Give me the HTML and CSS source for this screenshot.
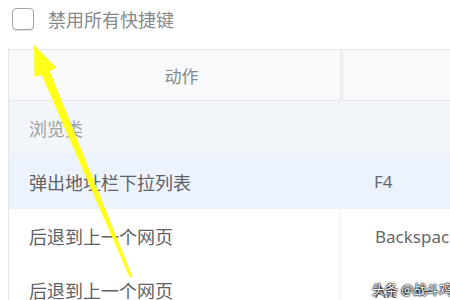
FILE: index.html
```
<!DOCTYPE html>
<html>
<head>
<meta charset="utf-8">
<link rel="stylesheet" href="styles.css">
</head>
<body>
<div class="page">
  <div class="topbar">
    <span class="checkbox"></span>
    <span class="label">禁用所有快捷键</span>
  </div>
  <div class="table">
    <div class="row head">
      <div class="cell c1">动作</div>
      <div class="cell c2"></div>
    </div>
    <div class="row cat">
      <div class="cell c1">浏览类</div>
      <div class="cell c2"></div>
    </div>
    <div class="row active">
      <div class="cell c1">弹出地址栏下拉列表</div>
      <div class="cell c2">F4</div>
    </div>
    <div class="row plain">
      <div class="cell c1">后退到上一个网页</div>
      <div class="cell c2">Backspace</div>
    </div>
    <div class="row plain">
      <div class="cell c1">后退到上一个网页</div>
      <div class="cell c2">Alt + ←</div>
    </div>
  </div>
  <svg class="arrow" width="450" height="300" viewBox="0 0 450 300">
    <polygon fill="#ffff1a" points="34,45 56.7,68.1 49.7,71.0 132.4,276.4 129.6,277.6 41.5,74.4 34.5,77.3"/>
  </svg>
  <div class="watermark">头条 @战斗鸡</div>
</div>
</body>
</html>
```
FILE: styles.css
```
html, body {
  margin: 0;
  padding: 0;
  background: #ffffff;
}
.page {
  position: relative;
  width: 450px;
  height: 300px;
  overflow: hidden;
  font-family: "Noto Sans CJK SC", "Noto Sans", sans-serif;
}
.topbar {
  display: flex;
  align-items: center;
  height: 38px;
  padding-left: 12px;
  margin-bottom: 11px;
}
.checkbox {
  width: 20px;
  height: 20px;
  border: 1.5px solid #a6a6a6;
  border-radius: 4px;
  box-shadow: 0 1px 1px rgba(0,0,0,0.12);
  margin-right: 14px;
}
.label {
  font-size: 18px;
  color: #85888c;
}
.table {
  margin-left: 8px;
  width: 640px;
  border-top: 1px solid #e4e7ea;
  border-left: 1px solid #e4e7ea;
}
.row {
  display: grid;
  grid-template-columns: 331px 1fr;
  align-items: stretch;
}
.cell {
  display: flex;
  align-items: center;
  font-size: 18px;
  color: #5e6166;
}
.c1 {
  padding-left: 20px;
}
.c2 {
  padding-left: 34px;
  font-family: "Noto Sans", "Noto Sans CJK SC", sans-serif;
  font-size: 17px;
  color: #64676c;
}
.head {
  height: 50px;
  background: #f8f9fb;
  border-bottom: 1px solid #e6e8eb;
}
.head .c1 {
  justify-content: center;
  padding-left: 14px;
  color: #85888c;
  font-size: 17px;
}
.head .c2 {
  border-left: 3px double #e3e5e8;
}
.cat {
  height: 53px;
  background: #f2f5f9;
}
.cat .c1 {
  color: #a0a3a7;
}
.active {
  height: 55px;
  background: #edf3fc;
}
.plain {
  height: 54px;
  background: #ffffff;
}
.plain .c2 {
  border-left: 1px solid #f0f1f3;
}
.arrow {
  position: absolute;
  left: 0;
  top: 0;
}
.watermark {
  position: absolute;
  left: 372px;
  top: 279px;
  font-size: 13px;
  color: #ffffff;
  text-shadow: 0 0 2px #000, 0 0 2px #000, 0 0 1px #000;
  white-space: nowrap;
}
```
